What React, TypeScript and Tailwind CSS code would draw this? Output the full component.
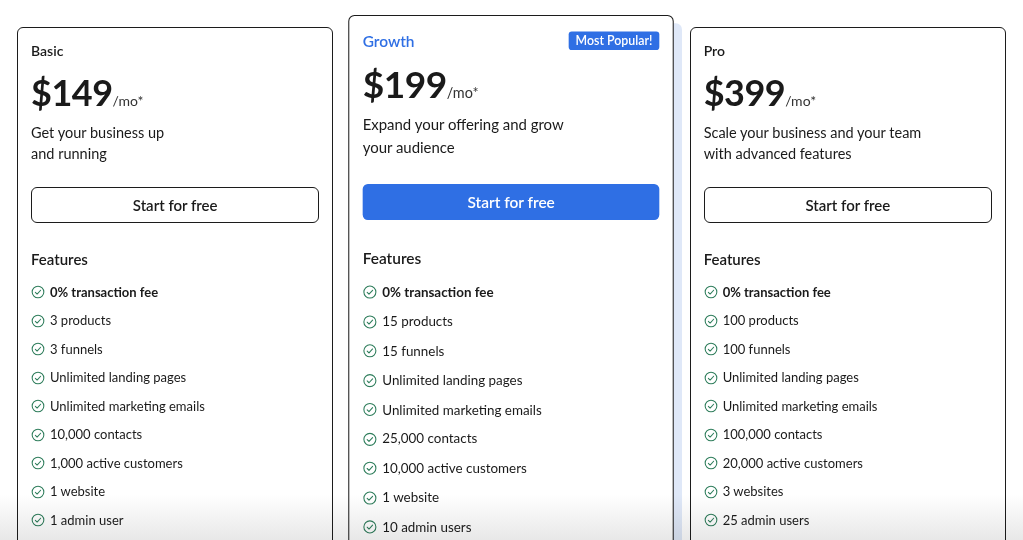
import React from "react";

interface Plan {
  name: string;
  price: string;
  desc: [string, string];
  features: string[];
  popular?: boolean;
}

const plans: Plan[] = [
  {
    name: "Basic",
    price: "$149",
    desc: ["Get your business up", "and running"],
    features: [
      "0% transaction fee",
      "3 products",
      "3 funnels",
      "Unlimited landing pages",
      "Unlimited marketing emails",
      "10,000 contacts",
      "1,000 active customers",
      "1 website",
      "1 admin user",
    ],
  },
  {
    name: "Growth",
    price: "$199",
    desc: ["Expand your offering and grow", "your audience"],
    popular: true,
    features: [
      "0% transaction fee",
      "15 products",
      "15 funnels",
      "Unlimited landing pages",
      "Unlimited marketing emails",
      "25,000 contacts",
      "10,000 active customers",
      "1 website",
      "10 admin users",
    ],
  },
  {
    name: "Pro",
    price: "$399",
    desc: ["Scale your business and your team", "with advanced features"],
    features: [
      "0% transaction fee",
      "100 products",
      "100 funnels",
      "Unlimited landing pages",
      "Unlimited marketing emails",
      "100,000 contacts",
      "20,000 active customers",
      "3 websites",
      "25 admin users",
    ],
  },
];

const CheckIcon = () => (
  <svg
    className="w-[14px] h-[14px] shrink-0 text-[#2e7d5b]"
    viewBox="0 0 24 24"
    fill="none"
    stroke="currentColor"
    strokeWidth={1.8}
    strokeLinecap="round"
    strokeLinejoin="round"
  >
    <circle cx="12" cy="12" r="10" />
    <path d="M7.5 12.5l3 3 6-6.5" />
  </svg>
);

const PlanCard = ({ plan }: { plan: Plan }) => {
  return (
    <div
      className={
        plan.popular
          ? "origin-top scale-[1.03] -mt-[12px] bg-white border-[1.5px] border-[#1c1c1c] rounded-[6px] px-[13px] pt-[14px] pb-8 shadow-[8px_8px_0_0_#dfe8f8]"
          : "bg-white border-[1.5px] border-[#1c1c1c] rounded-[6px] px-[13px] pt-[12px] pb-8"
      }
    >
      <div className="flex items-center justify-between h-[20px]">
        <span
          className={
            plan.popular
              ? "text-[15px] font-semibold text-[#2f6fe4]"
              : "text-[14px] font-semibold text-[#1a1a1a]"
          }
        >
          {plan.name}
        </span>
        {plan.popular && (
          <span className="bg-[#2f6fe4] text-white text-[12px] font-semibold leading-none px-[7px] py-[3px] rounded-[3px]">
            Most Popular!
          </span>
        )}
      </div>

      <div className="flex items-baseline mt-[10px] h-[44px]">
        <span className="text-[36px] font-bold tracking-[-0.5px] text-[#1a1a1a] leading-[44px]">
          {plan.price}
        </span>
        <span className="text-[14px] text-[#333]">/mo*</span>
      </div>

      <p
        className={
          plan.popular
            ? "mt-[7px] text-[14.5px] leading-[21.5px] text-[#1a1a1a]"
            : "mt-[8px] text-[14.5px] leading-[21px] text-[#1a1a1a]"
        }
      >
        {plan.desc[0]}
        <br />
        {plan.desc[1]}
      </p>

      <button
        className={
          plan.popular
            ? "mt-[25px] w-full h-[35px] rounded-[5px] bg-[#2f6fe4] text-white text-[15px] font-semibold"
            : "mt-[23px] w-full h-[36px] rounded-[6px] border-[1.5px] border-[#1c1c1c] bg-white text-[#1a1a1a] text-[15px] font-semibold"
        }
      >
        Start for free
      </button>

      <div
        className={
          plan.popular
            ? "mt-[26px] text-[15px] font-semibold text-[#1a1a1a]"
            : "mt-[25px] text-[15px] font-semibold text-[#1a1a1a]"
        }
      >
        Features
      </div>

      <ul className="mt-[13px] flex flex-col gap-[11px]">
        {plan.features.map((f, i) => (
          <li key={f} className="flex items-center gap-[5px] h-[17.5px]">
            <CheckIcon />
            <span
              className={
                i === 0
                  ? "text-[13px] font-bold text-[#1a1a1a]"
                  : "text-[13px] text-[#1a1a1a]"
              }
            >
              {f}
            </span>
          </li>
        ))}
      </ul>
    </div>
  );
};

export default function App() {
  return (
    <div
      className="relative h-[540px] overflow-hidden bg-white"
      style={{ fontFamily: "Lato, 'Noto Sans', sans-serif" }}
    >
      <div className="grid grid-cols-3 gap-[20px] items-start px-[17px] pt-[27px]">
        {plans.map((p) => (
          <PlanCard key={p.name} plan={p} />
        ))}
      </div>
      {/* bottom fade, multiplied so text stays dark */}
      <div className="pointer-events-none absolute left-0 right-0 bottom-0 h-[45px] mix-blend-multiply bg-gradient-to-b from-white to-[#e8e8e8]" />
    </div>
  );
}
